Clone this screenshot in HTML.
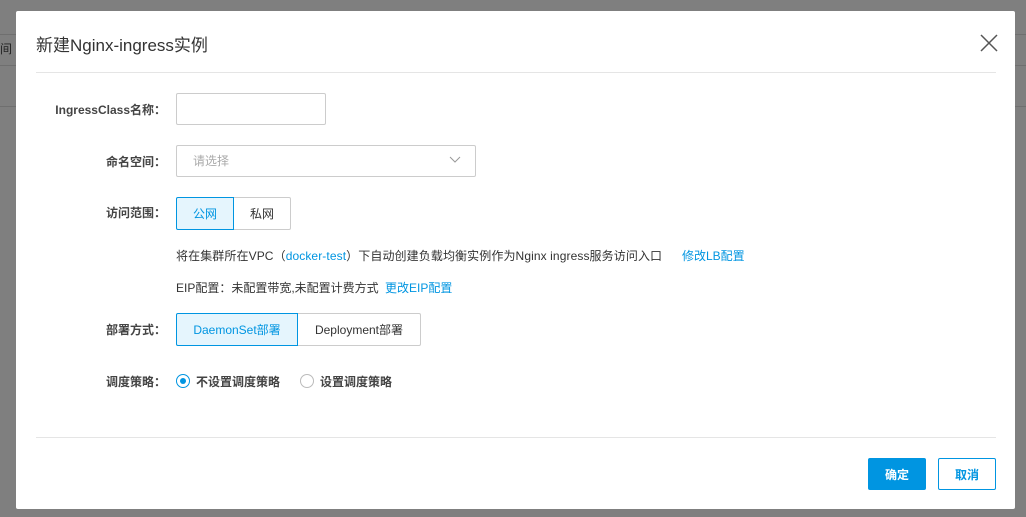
<!DOCTYPE html>
<html><head><meta charset="utf-8"><style>
*{box-sizing:border-box;margin:0;padding:0}
body{width:1026px;height:517px;background:#7f7f7f;position:relative;overflow:hidden;font-family:"Liberation Sans","Noto Sans CJK SC",sans-serif;font-size:12px;color:#333}
.a{position:absolute}
.modal{left:16px;top:11px;width:999px;height:498px;background:#fff;border-radius:2px}
.lbl{width:150px;text-align:right;color:#444;font-size:12px;font-weight:bold}
.box{border:1px solid #ccc;border-radius:2px;background:#fff}
.seg{display:flex;height:33px;font-size:12px}
.seg div{border:1px solid #ccc;display:flex;align-items:center;justify-content:center;color:#333}
.seg .on{background:#e5f5fd;border-color:#0095e1;color:#0095e1;border-radius:2px 0 0 2px}
.blue{color:#0095e1}
</style></head><body>
<div class="a" style="left:0;top:34px;width:16px;height:1px;background:#6f6f6f"></div>
<div class="a" style="left:0;top:40px;font-size:12px;color:#222">间</div>
<div class="a" style="left:0;top:65px;width:16px;height:1px;background:#6f6f6f"></div>
<div class="a" style="left:0;top:106px;width:16px;height:1px;background:#6f6f6f"></div>
<div class="a" style="left:1015px;top:34px;width:11px;height:1px;background:#6f6f6f"></div>
<div class="a" style="left:1015px;top:65px;width:11px;height:1px;background:#6f6f6f"></div>
<div class="a" style="left:1015px;top:106px;width:11px;height:1px;background:#6f6f6f"></div>
<div class="a modal">
 <div class="a" style="left:20px;top:20px;font-size:17px;color:#333">新建Nginx-ingress实例</div>
 <svg class="a" style="left:964px;top:23px" width="18" height="18" viewBox="0 0 18 18"><path d="M1 1L17 17M17 1L1 17" stroke="#555" stroke-width="1.5"/></svg>
 <div class="a" style="left:20px;top:61px;width:960px;height:1px;background:#e5e5e5"></div>

 <div class="a lbl" style="left:0;top:90px">IngressClass名称：</div>
 <div class="a box" style="left:160px;top:82px;width:150px;height:32px"></div>

 <div class="a lbl" style="left:0;top:142px">命名空间：</div>
 <div class="a box" style="left:160px;top:134px;width:300px;height:32px"></div>
 <div class="a" style="left:177px;top:141px;color:#aaa">请选择</div>
 <svg class="a" style="left:433px;top:145px" width="12" height="8" viewBox="0 0 12 8"><path d="M1 1L6 6L11 1" stroke="#999" fill="none"/></svg>

 <div class="a lbl" style="left:0;top:193px">访问范围：</div>
 <div class="a seg" style="left:160px;top:186px"><div class="on" style="width:58px">公网</div><div style="width:57px;border-left:none;border-radius:0 2px 2px 0">私网</div></div>

 <div class="a" style="left:160px;top:236px;letter-spacing:0.1px">将在集群所在VPC（<span class="blue">docker-test</span>）下自动创建负载均衡实例作为Nginx ingress服务访问入口</div>
 <div class="a blue" style="left:666px;top:236px">修改LB配置</div>
 <div class="a" style="left:160px;top:268px">EIP配置：未配置带宽,未配置计费方式</div>
 <div class="a blue" style="left:369px;top:268px">更改EIP配置</div>

 <div class="a lbl" style="left:0;top:310px">部署方式：</div>
 <div class="a seg" style="left:160px;top:302px"><div class="on" style="width:122px">DaemonSet部署</div><div style="width:123px;border-left:none;border-radius:0 2px 2px 0">Deployment部署</div></div>

 <div class="a lbl" style="left:0;top:362px">调度策略：</div>
 <div class="a" style="left:160px;top:363px;width:14px;height:14px;border:1px solid #0095e1;border-radius:50%"><div style="margin:3px;width:6px;height:6px;background:#0095e1;border-radius:50%"></div></div>
 <div class="a" style="left:180px;top:362px;font-weight:bold;color:#444">不设置调度策略</div>
 <div class="a" style="left:284px;top:363px;width:14px;height:14px;border:1px solid #bbb;border-radius:50%"></div>
 <div class="a" style="left:304px;top:362px;font-weight:bold;color:#444">设置调度策略</div>

 <div class="a" style="left:20px;top:426px;width:960px;height:1px;background:#e5e5e5"></div>
 <div class="a" style="left:852px;top:447px;width:58px;height:32px;background:#0095e1;border-radius:2px;color:#fff;font-weight:bold;display:flex;align-items:center;justify-content:center">确定</div>
 <div class="a" style="left:922px;top:447px;width:58px;height:32px;border:1px solid #0095e1;border-radius:2px;color:#0095e1;font-weight:bold;display:flex;align-items:center;justify-content:center">取消</div>
</div>
</body></html>
